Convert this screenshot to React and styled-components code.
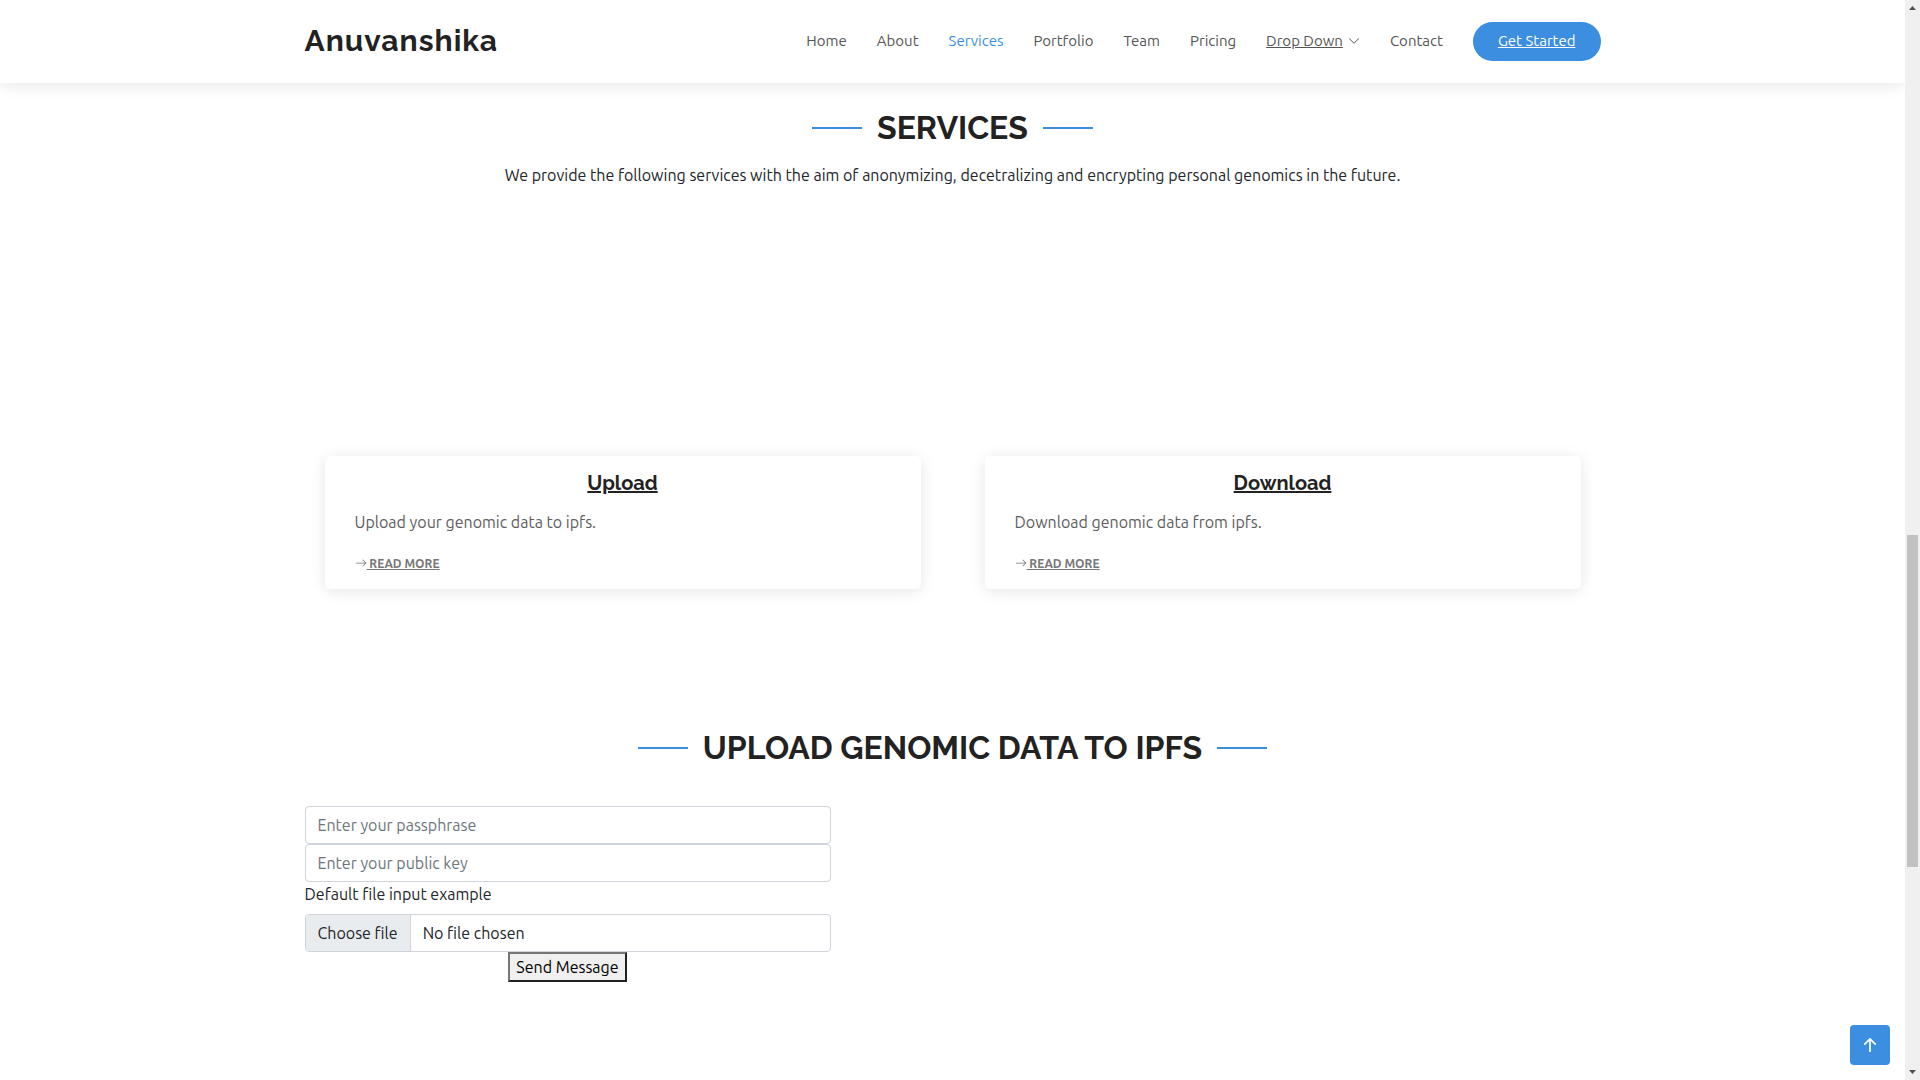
import React from "react";
import styled, { createGlobalStyle } from "styled-components";

const BODY_FONT = '"Ubuntu", "Noto Sans", sans-serif';
const HEAD_FONT = '"Raleway", "Open Sans", sans-serif';
const BLUE = "#3b8ee0";
const INK = "#222222";

const GlobalStyle = createGlobalStyle`
  *, *::before, *::after { box-sizing: border-box; }
  body {
    margin: 0;
    background: #fff;
    color: #212529;
    font: 400 16px/24px ${BODY_FONT};
    overflow: hidden;
  }
  h1, h2, h3, p, ul { margin: 0; padding: 0; }
`;

const Window = styled.div`
  display: flex;
  height: 100vh;
`;

const Page = styled.div`
  position: relative;
  flex: 1;
  min-width: 0;
  overflow: hidden;
`;

const Container = styled.div`
  max-width: 1320px;
  margin: 0 auto;
  padding: 0 12px;
`;

const Header = styled.header`
  padding: 22px 0;
  background: #fff;
  box-shadow: 0 2px 15px rgba(0, 0, 0, 0.1);
`;

const HeaderRow = styled(Container)`
  display: flex;
  align-items: center;
  justify-content: space-between;
`;

const Logo = styled.a`
  padding-bottom: 2px;
  font: 700 30px/36px ${HEAD_FONT};
  letter-spacing: 1px;
  color: ${INK};
  text-decoration: none;
`;

const NavList = styled.ul`
  display: flex;
  align-items: center;
  gap: 30px;
  list-style: none;
`;

const NavLink = styled.a`
  display: flex;
  align-items: center;
  gap: 5px;
  padding: 10px 0 11px;
  font-size: 15px;
  line-height: 18px;
  white-space: nowrap;
  color: ${({ $active }) => ($active ? BLUE : "#555555")};
  text-decoration: none;
`;

const Underlined = styled.span`
  text-decoration: underline;
`;

const StartLink = styled(NavLink)`
  padding: 10px 25px 11px;
  border-radius: 50px;
  background: ${BLUE};
  color: #fff;
  text-decoration: underline;
`;

const Icon = styled.svg`
  display: ${({ $inline }) => ($inline ? "inline-block" : "block")};
  width: ${({ $size }) => $size}px;
  height: ${({ $size }) => $size}px;
  fill: currentColor;
  vertical-align: -1px;
`;

const Services = styled.section`
  padding: 26px 0 140px;
`;

const SectionTitle = styled.h2`
  display: flex;
  align-items: center;
  justify-content: center;
  gap: 15px;
  font: 700 32px/38px ${HEAD_FONT};
  color: ${INK};

  &::before,
  &::after {
    content: "";
    width: 50px;
    height: 2px;
    background: ${BLUE};
  }
`;

const Lead = styled.p`
  margin-top: 16px;
  text-align: center;
`;

const Cards = styled.div`
  display: grid;
  grid-template-columns: 1fr 1fr;
  gap: 64px;
  padding: 269px 20px 0;
`;

const Card = styled.article`
  padding: 15px 30px;
  border-radius: 5px;
  background: #fff;
  box-shadow: 0 2px 15px rgba(0, 0, 0, 0.1);
`;

const CardTitle = styled.h3`
  font: 700 20px/24px ${HEAD_FONT};
  text-align: center;

  a { color: ${INK}; }
`;

const CardText = styled.p`
  margin: 15px 0 20px;
  color: #5e5e5e;
`;

const ReadMore = styled.a`
  display: block;
  font-size: 12px;
  font-weight: 700;
  line-height: 20px;
  color: #777777;
  text-decoration: none;
`;

const Form = styled.form`
  display: flex;
  flex-direction: column;
  width: calc(100% * 5 / 12 - 14px);
  margin-top: 39px;
`;

const TextField = styled.input`
  width: 100%;
  height: 38px;
  padding: 6px 12px;
  border: 1px solid #ced4da;
  border-radius: 4px;
  background: #fff;
  font: inherit;
  color: #212529;

  &::placeholder { color: #6c757d; opacity: 1; }
`;

const FileLabel = styled.label`
  margin-bottom: 8px;
`;

const FileBox = styled.label`
  display: flex;
  height: 38px;
  border: 1px solid #ced4da;
  border-radius: 4px;
  overflow: hidden;
  cursor: pointer;
`;

const FileButton = styled.span`
  padding: 6px 12px;
  border-right: 1px solid #ced4da;
  background: #e9ecef;
`;

const FileName = styled.span`
  padding: 6px 12px;
`;

const HiddenFile = styled.input`
  width: 0;
  height: 0;
  opacity: 0;
`;

const SendButton = styled.button`
  align-self: center;
  padding: 1px 6px;
  border: 2px solid;
  border-color: #767676 #212121 #212121 #767676;
  background: #efefef;
  font: inherit;
  color: #000;
`;

const BackToTop = styled.a`
  position: absolute;
  right: 15px;
  bottom: 15px;
  display: flex;
  align-items: center;
  justify-content: center;
  width: 40px;
  height: 40px;
  border-radius: 4px;
  background: ${BLUE};
  color: #fff;
`;

const Scrollbar = styled.aside`
  display: flex;
  flex-direction: column;
  width: 15px;
  background: #f0f0f0;
  color: #505050;
`;

const Space = styled.div`
  flex: ${({ $grow }) => $grow};
`;

const Thumb = styled(Space)`
  margin: 0 2px;
  background: #c1c1c1;
`;

const ICONS = {
  chevron:
    "M1.646 4.646a.5.5 0 0 1 .708 0L8 10.293l5.646-5.647a.5.5 0 0 1 .708.708l-6 6a.5.5 0 0 1-.708 0l-6-6a.5.5 0 0 1 0-.708z",
  right:
    "M1 8a.5.5 0 0 1 .5-.5h11.793l-3.147-3.146a.5.5 0 0 1 .708-.708l4 4a.5.5 0 0 1 0 .708l-4 4a.5.5 0 0 1-.708-.708L13.293 8.5H1.5A.5.5 0 0 1 1 8z",
  up: "M8 12a.5.5 0 0 0 .5-.5V5.707l2.146 2.147a.5.5 0 0 0 .708-.708l-3-3a.5.5 0 0 0-.708 0l-3 3a.5.5 0 1 0 .708.708L7.5 5.707V11.5a.5.5 0 0 0 .5.5z",
};

function Glyph({ name, size, inline }) {
  return (
    <Icon viewBox="0 0 16 16" $size={size} $inline={inline} aria-hidden="true">
      <path d={ICONS[name]} />
    </Icon>
  );
}

function ScrollArrow({ points }) {
  return (
    <Icon viewBox="0 0 15 15" $size={15} aria-hidden="true">
      <polygon points={points} />
    </Icon>
  );
}

const NAV = ["Home", "About", "Services", "Portfolio", "Team", "Pricing", "Drop Down", "Contact"];

const SERVICES = [
  { title: "Upload", text: "Upload your genomic data to ipfs." },
  { title: "Download", text: "Download genomic data from ipfs." },
];

export default function App() {
  return (
    <>
      <GlobalStyle />
      <Window>
        <Page>
          <Header>
            <HeaderRow>
              <Logo href="#home">Anuvanshika</Logo>
              <nav>
                <NavList>
                  {NAV.map((item) => (
                    <li key={item}>
                      <NavLink href="#" $active={item === "Services"}>
                        {item === "Drop Down" ? (
                          <>
                            <Underlined>{item}</Underlined>
                            <Glyph name="chevron" size={12} />
                          </>
                        ) : (
                          item
                        )}
                      </NavLink>
                    </li>
                  ))}
                  <li>
                    <StartLink href="#about">Get Started</StartLink>
                  </li>
                </NavList>
              </nav>
            </HeaderRow>
          </Header>

          <main>
            <Services>
              <Container>
                <SectionTitle>SERVICES</SectionTitle>
                <Lead>
                  We provide the following services with the aim of anonymizing, decetralizing and
                  encrypting personal genomics in the future.
                </Lead>
                <Cards>
                  {SERVICES.map(({ title, text }) => (
                    <Card key={title}>
                      <CardTitle>
                        <a href="#">{title}</a>
                      </CardTitle>
                      <CardText>{text}</CardText>
                      <ReadMore href="#">
                        <Glyph name="right" size={12} inline />
                        <Underlined>&nbsp;READ MORE</Underlined>
                      </ReadMore>
                    </Card>
                  ))}
                </Cards>
              </Container>
            </Services>

            <section>
              <Container>
                <SectionTitle>UPLOAD GENOMIC DATA TO IPFS</SectionTitle>
                <Form>
                  <TextField type="text" placeholder="Enter your passphrase" aria-label="Passphrase" />
                  <TextField type="text" placeholder="Enter your public key" aria-label="Public key" />
                  <FileLabel htmlFor="formFile">Default file input example</FileLabel>
                  <FileBox>
                    <FileButton>Choose file</FileButton>
                    <FileName>No file chosen</FileName>
                    <HiddenFile type="file" id="formFile" />
                  </FileBox>
                  <SendButton type="button">Send Message</SendButton>
                </Form>
              </Container>
            </section>
          </main>

          <BackToTop href="#" aria-label="Back to top">
            <Glyph name="up" size={28} />
          </BackToTop>
        </Page>

        <Scrollbar aria-hidden="true">
          <ScrollArrow points="4,10 11,10 7.5,6" />
          <Space $grow={520} />
          <Thumb $grow={332} />
          <Space $grow={198} />
          <ScrollArrow points="4,5 11,5 7.5,9" />
        </Scrollbar>
      </Window>
    </>
  );
}
